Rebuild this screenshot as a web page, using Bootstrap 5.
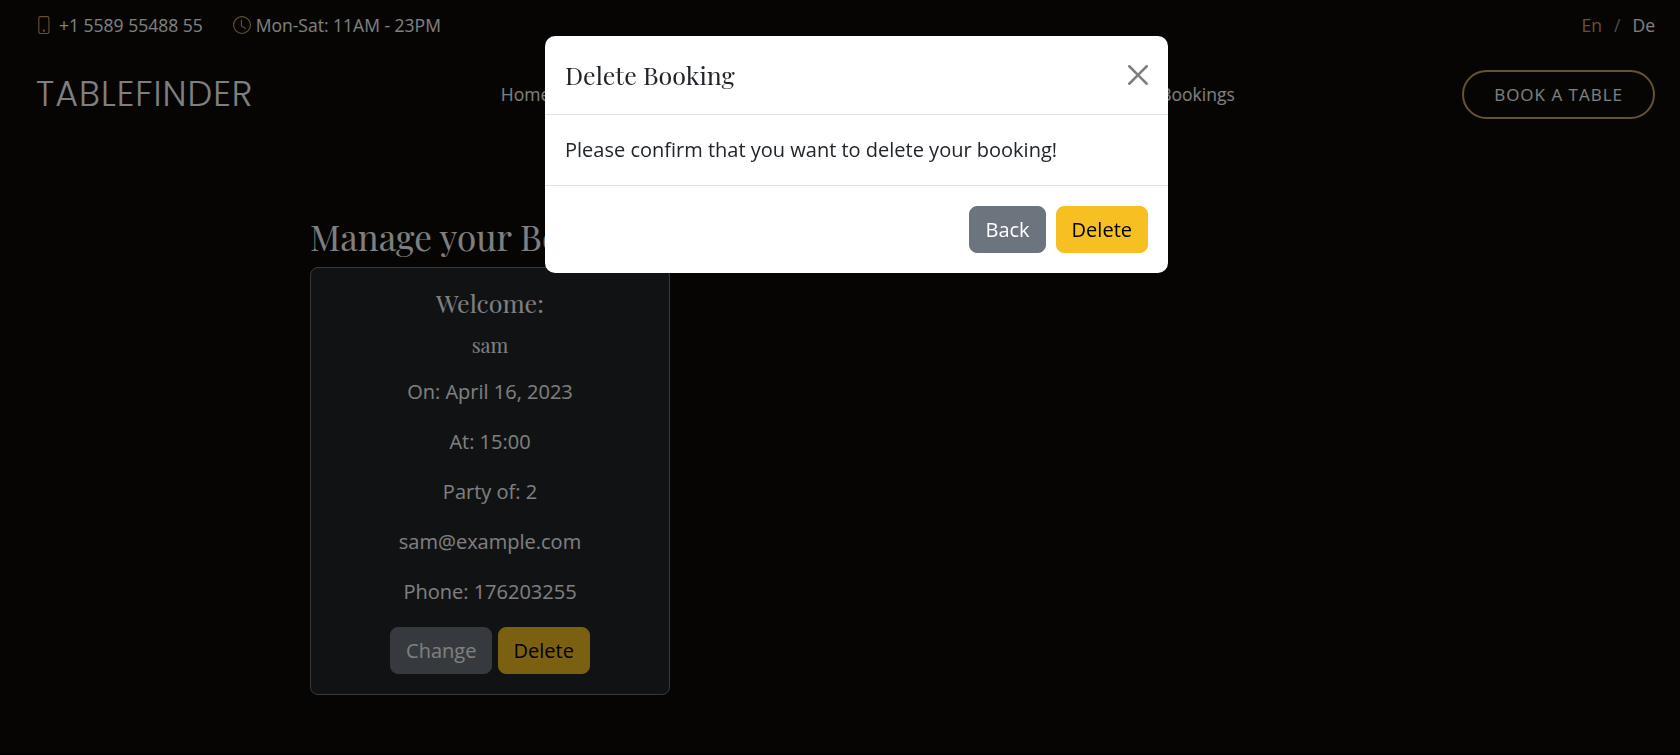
<!DOCTYPE html>
<html lang="en">
<head>
<meta charset="utf-8">
<meta name="viewport" content="width=device-width, initial-scale=1">
<title>Tablefinder - Manage your Booking</title>
<link href="https://cdn.jsdelivr.net/npm/bootstrap@5.3.0/dist/css/bootstrap.min.css" rel="stylesheet">
<style>
:root { --gold: #cda45e; --serif: "Playfair Display", "Liberation Serif", serif; }
html { font-size: 20px; }
body { background: #0c0b09; color: #fff; font-family: "Open Sans", sans-serif; min-height: 100vh; }
a { color: #fff; text-decoration: none; }
h1, h2, h3 { font-family: var(--serif); font-weight: 400; }
.site-head { padding: 0 25px 0 36px; }
.topline { height: 50px; }
.topline svg { width: 18px; height: 18px; color: var(--gold); }
.langs { gap: 12px; }
.langs .active { color: var(--gold); }
.langs .slash { color: #999; }
.brand { font-family: Poppins, Lato, sans-serif; font-weight: 300; font-size: 35px; line-height: 44px; letter-spacing: 1px; margin-right: 20px; }
.mainbar { height: 88px; }
.menu { width: 734px; }
.btn { line-height: 29px; padding: 8px 15px; border-width: 1px; border-radius: 8px; }
.btn-warning { --bs-btn-bg: #f6c022; --bs-btn-border-color: #f6c022; }
.btn.book { border: 2px solid var(--gold); color: #fff; font-size: 17px; letter-spacing: 1px; line-height: 25px; padding: 10px 30px; }
.page-main { padding: 78px 25px 57px 310px; }
.page-title { font-size: 35px; line-height: 42px; margin: 0 0 9px; }
.booking { --bs-card-bg: #212529; --bs-card-border-color: #6c757d; --bs-card-color: #fff; width: 360px; border-radius: 8px; }
.booking h2 { font-size: 25px; line-height: 30px; margin-bottom: 15px; }
.booking h3 { font-size: 20px; line-height: 24px; margin-bottom: 20px; }
.booking p { line-height: 30px; margin-bottom: 20px; }
.foot { background: #000; height: 2px; }
.confirm { padding-left: 33px; color: #212529; }
.confirm .modal-dialog { max-width: 623px; margin: 36px auto; }
.confirm .modal-content { border: 0; border-radius: 10px; }
.confirm .modal-title { font-size: 25px; line-height: 38px; font-weight: 400; }
.confirm .modal-header, .confirm .modal-body { padding: 20px; }
.confirm .modal-footer { padding: 20px; gap: 10px; }
.confirm .modal-footer > * { margin: 0; }
.confirm .btn-secondary { font-weight: 500; }
</style>
</head>
<body class="d-flex flex-column">
<header class="site-head">
  <div class="topline small d-flex align-items-center justify-content-between">
    <div class="d-flex align-items-center">
      <span class="d-flex align-items-center me-4 gap-1">
        <svg viewBox="1 0 16 16" fill="currentColor" aria-hidden="true"><path d="M11 1a1 1 0 0 1 1 1v12a1 1 0 0 1-1 1H5a1 1 0 0 1-1-1V2a1 1 0 0 1 1-1h6zM5 0a2 2 0 0 0-2 2v12a2 2 0 0 0 2 2h6a2 2 0 0 0 2-2V2a2 2 0 0 0-2-2H5z"/><path d="M8 14a1 1 0 1 0 0-2 1 1 0 0 0 0 2z"/></svg>
        <span>+1 5589 55488 55</span>
      </span>
      <span class="d-flex align-items-center gap-1">
        <svg viewBox="0 0 16 16" fill="currentColor" aria-hidden="true"><path d="M8 3.500a.5.5 0 0 0-1 0V9a.5.5 0 0 0 .252.434l3.500 2a.5.5 0 0 0 .496-.868L8 8.710V3.500z"/><path d="M8 16A8 8 0 1 0 8 0a8 8 0 0 0 0 16zm7-8A7 7 0 1 1 1 8a7 7 0 0 1 14 0z"/></svg>
        <span>Mon-Sat: 11AM - 23PM</span>
      </span>
    </div>
    <div class="langs d-flex"><a href="#" class="active">En</a><span class="slash">/</span><a href="#">De</a></div>
  </div>
  <div class="mainbar d-flex align-items-center">
    <a href="#" class="brand">TABLEFINDER</a>
    <nav class="menu small mx-auto d-flex justify-content-between"><a href="#">Home</a><a href="#">Bookings</a></nav>
    <a href="#" class="btn book rounded-pill">BOOK A TABLE</a>
  </div>
</header>
<main class="page-main flex-grow-1">
  <h1 class="page-title">Manage your Booking</h1>
  <div class="card booking text-center">
    <div class="card-body">
      <h2>Welcome:</h2>
      <h3>sam</h3>
      <p>On: April 16, 2023</p>
      <p>At: 15:00</p>
      <p>Party of: 2</p>
      <p>sam@example.com</p>
      <p>Phone: 176203255</p>
      <button type="button" class="btn btn-secondary">Change</button>
      <button type="button" class="btn btn-warning">Delete</button>
    </div>
  </div>
</main>
<footer class="foot"></footer>

<div class="modal-backdrop show"></div>
<div class="modal confirm show d-block" tabindex="-1" role="dialog" aria-labelledby="confirmTitle">
  <div class="modal-dialog">
    <div class="modal-content">
      <div class="modal-header">
        <h2 class="modal-title" id="confirmTitle">Delete Booking</h2>
        <button type="button" class="btn-close" aria-label="Close"></button>
      </div>
      <div class="modal-body">Please confirm that you want to delete your booking!</div>
      <div class="modal-footer">
        <button type="button" class="btn btn-secondary">Back</button>
        <button type="button" class="btn btn-warning">Delete</button>
      </div>
    </div>
  </div>
</div>
<script src="https://cdn.jsdelivr.net/npm/bootstrap@5.3.0/dist/js/bootstrap.bundle.min.js"></script>
</body>
</html>
